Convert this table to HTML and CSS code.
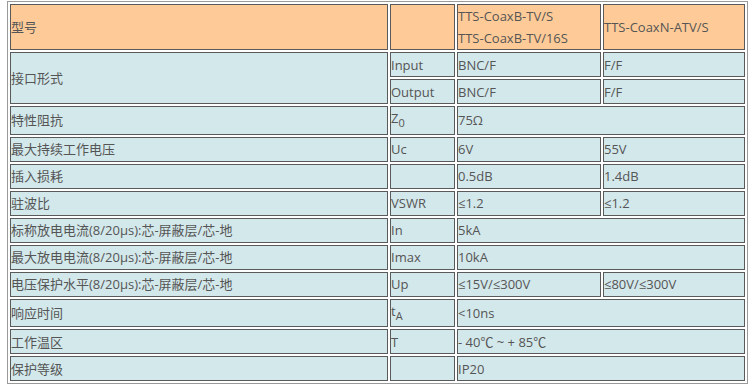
FILE: index.html
```html
<!DOCTYPE html>
<html lang="zh-CN">
<head>
<meta charset="utf-8">
<title>参数表</title>
<link rel="stylesheet" href="styles.css">
</head>
<body>
<div class="wrap">
<table class="spec">
  <colgroup>
    <col class="c1"><col class="c2"><col class="c3"><col class="c4">
  </colgroup>
  <tr class="head">
    <td>型号</td>
    <td></td>
    <td>TTS-CoaxB-TV/S<br>TTS-CoaxB-TV/16S</td>
    <td>TTS-CoaxN-ATV/S</td>
  </tr>
  <tr>
    <td rowspan="2">接口形式</td>
    <td>Input</td>
    <td>BNC/F</td>
    <td>F/F</td>
  </tr>
  <tr>
    <td>Output</td>
    <td>BNC/F</td>
    <td>F/F</td>
  </tr>
  <tr>
    <td>特性阻抗</td>
    <td>Z<sub>0</sub></td>
    <td colspan="2">75Ω</td>
  </tr>
  <tr>
    <td>最大持续工作电压</td>
    <td>Uc</td>
    <td>6V</td>
    <td>55V</td>
  </tr>
  <tr>
    <td>插入损耗</td>
    <td></td>
    <td>0.5dB</td>
    <td>1.4dB</td>
  </tr>
  <tr>
    <td>驻波比</td>
    <td>VSWR</td>
    <td>≤1.2</td>
    <td>≤1.2</td>
  </tr>
  <tr>
    <td>标称放电电流(8/20μs):芯-屏蔽层/芯-地</td>
    <td>In</td>
    <td colspan="2">5kA</td>
  </tr>
  <tr>
    <td>最大放电电流(8/20μs):芯-屏蔽层/芯-地</td>
    <td>Imax</td>
    <td colspan="2">10kA</td>
  </tr>
  <tr>
    <td>电压保护水平(8/20μs):芯-屏蔽层/芯-地</td>
    <td>Up</td>
    <td>≤15V/≤300V</td>
    <td>≤80V/≤300V</td>
  </tr>
  <tr>
    <td>响应时间</td>
    <td>t<sub>A</sub></td>
    <td colspan="2">&lt;10ns</td>
  </tr>
  <tr>
    <td>工作温区</td>
    <td>T</td>
    <td colspan="2">- 40℃ ~ + 85℃</td>
  </tr>
  <tr>
    <td>保护等级</td>
    <td></td>
    <td colspan="2">IP20</td>
  </tr>
</table>
</div>
</body>
</html>
```
FILE: styles.css
```css
html, body {
  margin: 0;
  padding: 0;
  background: #ffffff;
}
.wrap {
  padding: 1px 0 0 7px;
}
.spec {
  table-layout: fixed;
  width: 741px;
  border-collapse: separate;
  border-spacing: 2px;
  border: 1px solid #9a9a9a;
  font-family: "Open Sans", "Noto Sans CJK SC", sans-serif;
  font-size: 13px;
  color: #555555;
}
.c1 { width: 378px; }
.c2 { width: 65px; }
.c3 { width: 144px; }
.c4 { width: 142px; }
.spec td {
  border: 1px solid #5a5a5a;
  background: #d3e8eb;
  padding: 0;
  line-height: 22px;
  height: 23px;
  vertical-align: middle;
  white-space: nowrap;
  overflow: hidden;
}
.spec tr.head td {
  background: #fecb98;
  height: 44px;
}
.spec sub {
  font-size: 11px;
}
```
